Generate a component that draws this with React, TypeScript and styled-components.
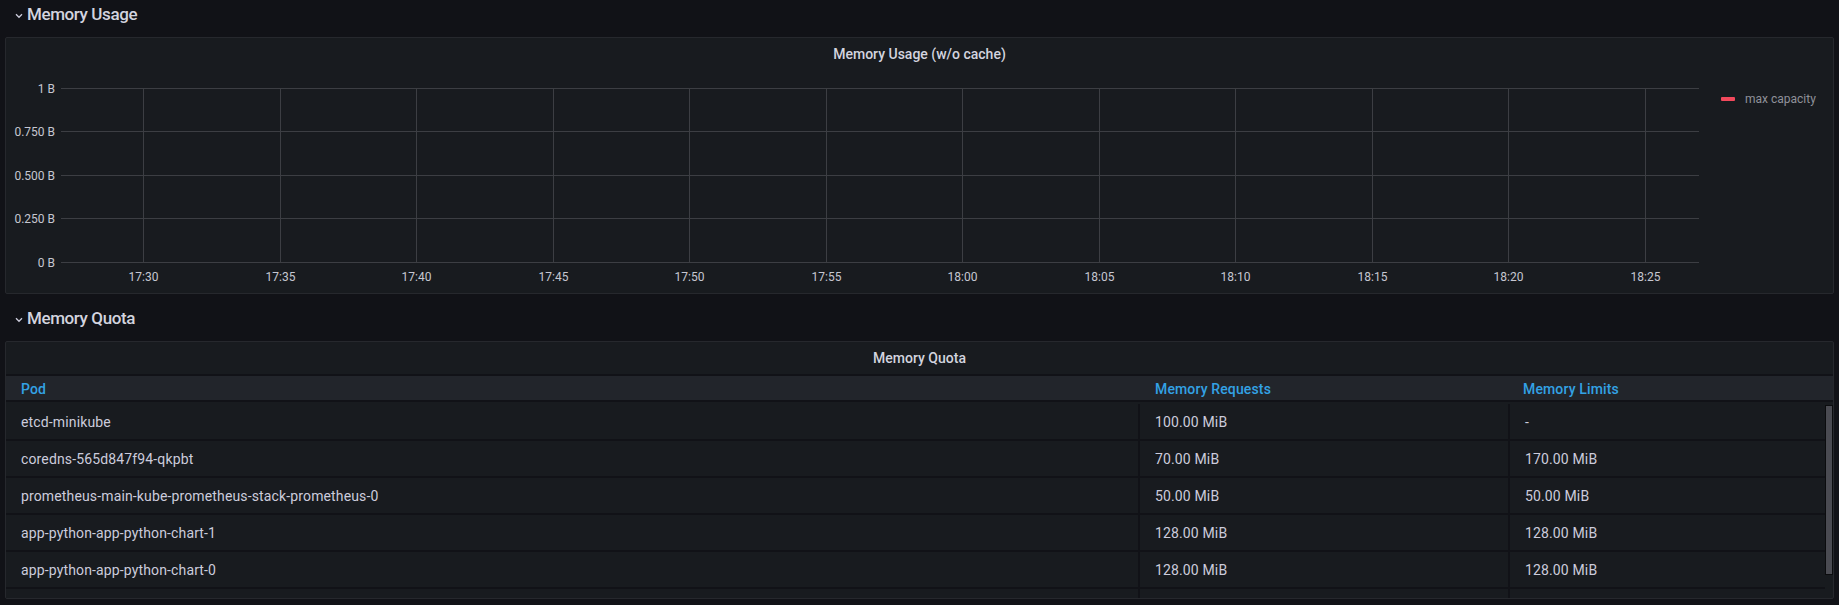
import React from "react";
import styled, { createGlobalStyle } from "styled-components";

const GlobalStyle = createGlobalStyle`
  html, body {
    margin: 0;
    padding: 0;
    background: #111217;
  }
  body {
    font-family: Roboto, "Liberation Sans", sans-serif;
    color: #ccccdc;
  }
`;

const Page = styled.div`
  display: flex;
  flex-direction: column;
  padding: 0 5px;
  height: 605px;
  overflow: hidden;
  box-sizing: border-box;
`;

const RowHeader = styled.div<{ $mt?: number }>`
  display: flex;
  align-items: center;
  height: 28px;
  margin-top: ${(p) => p.$mt ?? 0}px;
  margin-bottom: 9px;
  padding-left: 10px;
  gap: 4px;
`;

const RowTitle = styled.span`
  font-size: 17px;
  line-height: 28px;
  letter-spacing: -0.4px;
  font-weight: 500;
  color: #d3d4df;
`;

const Chevron = () => (
  <svg width="8" height="6" viewBox="0 0 8 6" style={{ marginTop: 3 }}>
    <path d="M1 1.3 L4 4.3 L7 1.3" fill="none" stroke="#ccccdc" strokeWidth="1.3" />
  </svg>
);

const Panel = styled.div<{ $h: number }>`
  display: flex;
  flex-direction: column;
  height: ${(p) => p.$h}px;
  box-sizing: border-box;
  background: #181b1f;
  border: 1px solid #26282d;
  border-radius: 2px;
  overflow: hidden;
  flex-shrink: 0;
`;

const PanelTitle = styled.div`
  height: 32px;
  line-height: 32px;
  text-align: center;
  font-size: 14px;
  font-weight: 500;
  color: #d3d4df;
  flex-shrink: 0;
`;

const ChartBody = styled.div`
  display: flex;
  flex: 1;
`;

const Legend = styled.div`
  display: flex;
  align-items: flex-start;
  padding: 21px 0 0 15px;
`;

const LegendItem = styled.div`
  display: flex;
  align-items: center;
  gap: 10px;
  height: 16px;
  font-size: 12px;
  color: #8f919a;
`;

const LegendSwatch = styled.span`
  width: 14px;
  height: 4px;
  background: #f2495c;
  border-radius: 1px;
`;

const Separator = styled.div`
  height: 2px;
  background: #111217;
  flex-shrink: 0;
`;

const GridRow = styled.div`
  display: grid;
  grid-template-columns: 1132px 370px 1fr;
`;

const HeaderRow = styled(GridRow)`
  height: 24px;
  background: #22252b;
  flex-shrink: 0;
`;

const HeaderCell = styled.div<{ $pad?: number }>`
  padding: 3px 0 0 ${(p) => p.$pad ?? 15}px;
  border-left: ${(p) => (p.$pad === undefined ? 0 : 2)}px solid transparent;
  font-size: 14px;
  line-height: 21px;
  letter-spacing: 0.14px;
  font-weight: 500;
  color: #33a2e5;
`;

const TableBody = styled.div`
  position: relative;
  flex: 1;
  overflow: hidden;
  padding: 2px 8px 0 0;
`;

const BodyRow = styled(GridRow)`
  height: 35px;
  background: #181b1f;
  border-bottom: 2px solid #111217;
`;

const Cell = styled.div<{ $first?: boolean }>`
  padding: 2px 0 0 15px;
  border-left: ${(p) => (p.$first ? "none" : "2px solid #111217")};
  font-size: 14px;
  line-height: 33px;
  letter-spacing: 0.14px;
  color: #ccccdc;
  white-space: nowrap;
  overflow: hidden;
`;

const ScrollThumb = styled.div`
  position: absolute;
  right: 0;
  top: 3px;
  width: 8px;
  height: 170px;
  box-sizing: border-box;
  background: #4a4b52;
  border: 1px solid #0b0c0e;
`;

const yTicks = [
  { label: "1 B", y: 18.5 },
  { label: "0.750 B", y: 61.5 },
  { label: "0.500 B", y: 105.5 },
  { label: "0.250 B", y: 148.5 },
  { label: "0 B", y: 192.5 },
];

const xLabels = [
  "17:30", "17:35", "17:40", "17:45", "17:50", "17:55",
  "18:00", "18:05", "18:10", "18:15", "18:20", "18:25",
];

const TimeChart = () => {
  const gridColor = "#3c3e43";
  return (
    <svg width="1700" height="222" viewBox="0 0 1700 222">
      {yTicks.map((t) => (
        <g key={t.label}>
          <line x1="55" x2="1693" y1={t.y} y2={t.y} stroke={gridColor} strokeWidth="1" />
          <text
            x="49"
            y={t.y}
            textAnchor="end"
            dominantBaseline="central"
            fontSize="12"
            fontFamily="Roboto, sans-serif"
            fill="#c6c7d1"
          >
            {t.label}
          </text>
        </g>
      ))}
      {xLabels.map((l, i) => {
        const x = Math.round(143 + 136.5 * i) - 6 + 0.5;
        return (
          <g key={l}>
            <line x1={x} x2={x} y1="18.5" y2="192.5" stroke={gridColor} strokeWidth="1" />
            <text
              x={x}
              y="207"
              textAnchor="middle"
              dominantBaseline="central"
              fontSize="12"
              fontFamily="Roboto, sans-serif"
              fill="#c6c7d1"
            >
              {l}
            </text>
          </g>
        );
      })}
    </svg>
  );
};

const rows = [
  ["etcd-minikube", "100.00 MiB", "-"],
  ["coredns-565d847f94-qkpbt", "70.00 MiB", "170.00 MiB"],
  ["prometheus-main-kube-prometheus-stack-prometheus-0", "50.00 MiB", "50.00 MiB"],
  ["app-python-app-python-chart-1", "128.00 MiB", "128.00 MiB"],
  ["app-python-app-python-chart-0", "128.00 MiB", "128.00 MiB"],
  ["", "", ""],
];

export default function App() {
  return (
    <>
      <GlobalStyle />
      <Page>
        <RowHeader>
          <Chevron />
          <RowTitle>Memory Usage</RowTitle>
        </RowHeader>
        <Panel $h={257}>
          <PanelTitle>Memory Usage (w/o cache)</PanelTitle>
          <ChartBody>
            <TimeChart />
            <Legend>
              <LegendItem>
                <LegendSwatch />
                max capacity
              </LegendItem>
            </Legend>
          </ChartBody>
        </Panel>
        <RowHeader $mt={10}>
          <Chevron />
          <RowTitle>Memory Quota</RowTitle>
        </RowHeader>
        <Panel $h={258}>
          <PanelTitle>Memory Quota</PanelTitle>
          <Separator />
          <HeaderRow>
            <HeaderCell>Pod</HeaderCell>
            <HeaderCell $pad={15}>Memory Requests</HeaderCell>
            <HeaderCell $pad={13}>Memory Limits</HeaderCell>
          </HeaderRow>
          <Separator />
          <TableBody>
            {rows.map((r, i) => (
              <BodyRow key={i}>
                <Cell $first>{r[0]}</Cell>
                <Cell>{r[1]}</Cell>
                <Cell>{r[2]}</Cell>
              </BodyRow>
            ))}
            <ScrollThumb />
          </TableBody>
        </Panel>
      </Page>
    </>
  );
}
